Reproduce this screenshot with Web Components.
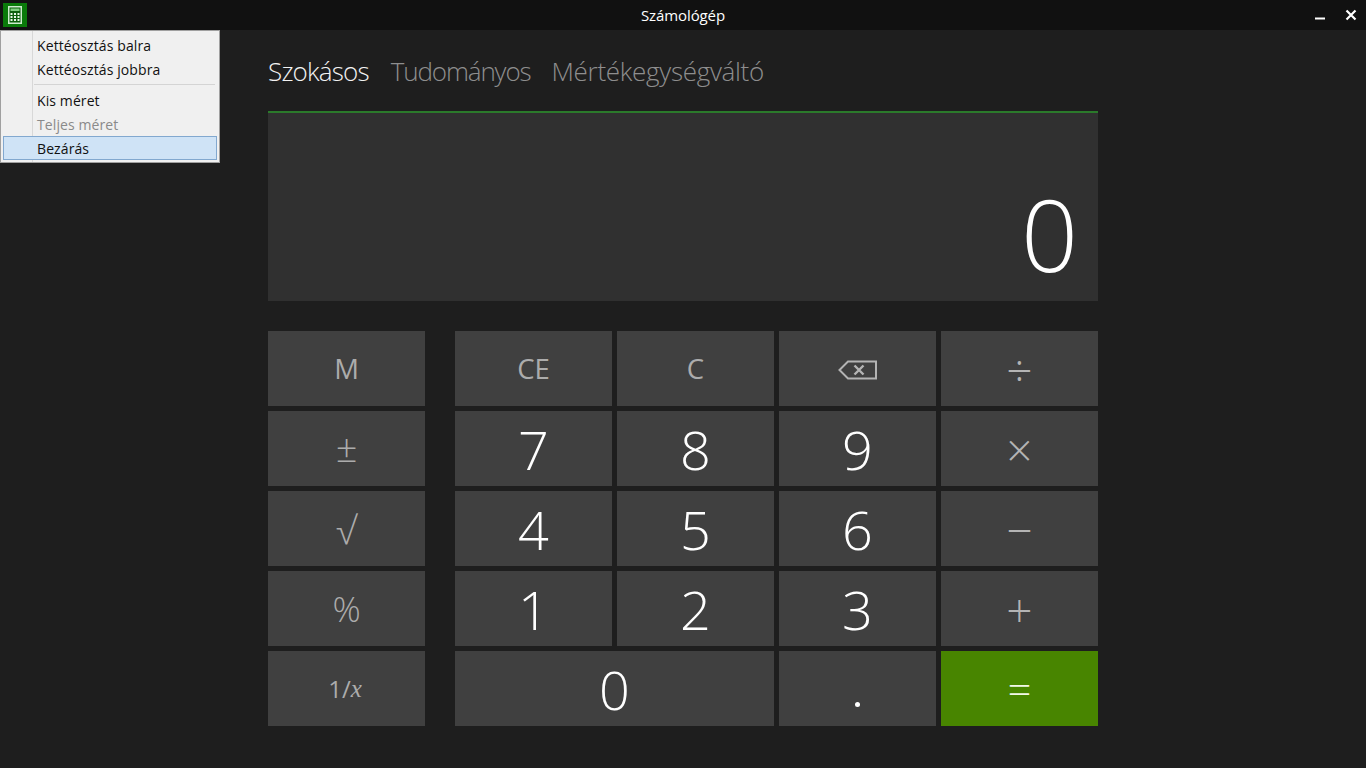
<!DOCTYPE html>
<html lang="hu">
<head>
<meta charset="utf-8">
<title>Számológép</title>
<style>
  html, body { margin: 0; height: 100%; background: #1e1e1e; overflow: hidden; }
  body { font-family: "Open Sans", "Liberation Sans", sans-serif; }
</style>
</head>
<body>
<calc-app></calc-app>

<script>
// Title bar with app icon, centered title and window buttons
class TitleBar extends HTMLElement {
  constructor() {
    super();
    this.attachShadow({ mode: "open" });
    this.shadowRoot.innerHTML = `
      <style>
        :host { display: flex; align-items: center; height: 30px; background: #111; color: #fff; box-sizing: border-box; }
        .side { flex: 1 1 200px; box-sizing: border-box; display: flex; align-items: center; }
        .right { justify-content: flex-end; gap: 20px; padding-right: 9px; }
        .title { font: 400 15px "Open Sans", sans-serif; letter-spacing: -0.1px; }
        svg { display: block; }
        .logo { margin-left: 3px; }
      </style>
      <div class="side">
        <svg class="logo" width="24" height="24" viewBox="0 0 24 24">
          <rect width="24" height="24" fill="#0a7a0a"/>
          <rect x="5.750" y="3.750" width="12.500" height="16.500" fill="#0b5f0b" stroke="#cdeccd" stroke-width="1.500"/>
          <rect x="7.500" y="5.500" width="9" height="2.500" fill="#7fcf7f"/>
          <path d="M7.500 10h2v2h-2zM11 10h2v2h-2zM14.500 10h2v2h-2zM7.500 13h2v2h-2zM11 13h2v2h-2zM14.500 13h2v2h-2zM7.500 16h2v2h-2zM11 16h2v2h-2zM14.500 16h2v2h-2z" fill="#e6f7e6"/>
        </svg>
      </div>
      <div class="title">Számológép</div>
      <div class="side right">
        <svg width="10" height="10" viewBox="0 0 10 10"><rect y="7.500" width="10" height="2" fill="#fff"/></svg>
        <svg width="12" height="12" viewBox="0 0 12 12"><path d="M1.500 1.500l9 9M10.500 1.500l-9 9" stroke="#fff" stroke-width="2.200" fill="none"/></svg>
      </div>
    `;
  }
}

// Classic system menu, lies over the window content
class SysMenu extends HTMLElement {
  constructor() {
    super();
    this.attachShadow({ mode: "open" });
    this.shadowRoot.innerHTML = `
      <style>
        :host {
          position: absolute; left: 0; top: 30px; width: 220px; height: 133px;
          box-sizing: border-box; padding: 3px 2px 2px;
          background: #f0f0f0; border: 1px solid #a0a0a0; color: #111;
          font: 400 14px "Open Sans", sans-serif; letter-spacing: 0.1px;
        }
        .gutter { position: absolute; left: 31px; top: 0; bottom: 0; width: 1px; background: #d8d8d8; }
        .item { position: relative; height: 24px; line-height: 23px; padding-left: 34px; box-sizing: border-box; }
        .off { color: #8a8a8a; }
        .sep { position: relative; height: 1px; margin: 2px 2px 4px 31px; background: #d4d4d4; }
        .on { background: #cfe3f6; border: 1px solid #82a8cf; padding-left: 33px; line-height: 23px; margin-top: -1px; }
      </style>
      <div class="gutter"></div>
      <div class="item">Kettéosztás balra</div>
      <div class="item">Kettéosztás jobbra</div>
      <div class="sep"></div>
      <div class="item">Kis méret</div>
      <div class="item off">Teljes méret</div>
      <div class="item on">Bezárás</div>
    `;
  }
}

class CalcTabs extends HTMLElement {
  constructor() {
    super();
    this.attachShadow({ mode: "open" });
    this.shadowRoot.innerHTML = `
      <style>
        :host { display: flex; gap: 21px; height: 81px; padding-top: 21px; box-sizing: border-box; font: 300 26px/40px "Open Sans", sans-serif; color: #8e8e8e; }
        .active { color: #f2f2f2; letter-spacing: -0.8px; }
        .sci { letter-spacing: -1.15px; margin-left: 1px; }
        .conv { letter-spacing: -0.3px; }
      </style>
      <span class="active">Szokásos</span>
      <span class="sci">Tudományos</span>
      <span class="conv">Mértékegységváltó</span>
    `;
  }
}

class CalcDisplay extends HTMLElement {
  constructor() {
    super();
    this.attachShadow({ mode: "open" });
    this.shadowRoot.innerHTML = `
      <style>
        :host {
          display: flex; justify-content: flex-end; align-items: flex-end;
          height: 190px; box-sizing: border-box; padding: 0 20px 0 0;
          background: #303030; border-top: 2px solid #2b7a2b; color: #fff;
          font: 300 100px/136px "Open Sans", sans-serif;
        }
      </style>
      <slot></slot>
    `;
  }
}

// One keypad button. kind: "op" grey label, "sym" big grey sign, "eq" green, default white digit
class CalcKey extends HTMLElement {
  constructor() {
    super();
    this.attachShadow({ mode: "open" });
    this.shadowRoot.innerHTML = `
      <style>
        :host {
          display: flex; align-items: center; justify-content: center;
          height: 75px; background: #404040; color: #fff;
          font: 300 54px/1 "Open Sans", sans-serif;
        }
        :host([kind="op"]) { color: #acacac; font-size: 27.500px; font-weight: 400; }
        :host([kind="sym"]) { color: #b4b4b4; font-size: 46px; font-weight: 300; }
        :host([kind="eq"]) { background: #488500; font-size: 42px; color: #f2f7e8; }
        :host([wide]) { grid-column: span 2; }
      </style>
      <slot></slot>
    `;
  }
}

class CalcKeypad extends HTMLElement {
  constructor() {
    super();
    this.attachShadow({ mode: "open" });
    this.shadowRoot.innerHTML = `
      <style>
        :host { display: grid; grid-template-columns: 157px 1fr; column-gap: 30px; margin-top: 30px; }
        .col { display: grid; gap: 5px; grid-auto-rows: 75px; }
        .pad { display: grid; gap: 5px; grid-template-columns: repeat(4, 1fr); grid-auto-rows: 75px; }
      </style>
      <div class="col"><slot name="mem"></slot></div>
      <div class="pad"><slot></slot></div>
    `;
  }
}

class CalcApp extends HTMLElement {
  constructor() {
    super();
    this.attachShadow({ mode: "open" });
    this.shadowRoot.innerHTML = `
      <style>
        :host { display: block; height: 768px; position: relative; background: #1e1e1e; }
        main { width: 830px; margin-left: 268px; }
        .x { font: italic 400 25px "Liberation Serif", serif; }
        .one { font-size: 24px; margin-left: -3px; }
        .pm { font-size: 38px; font-weight: 300; margin-top: -3px; }
        .root { font-size: 38px; font-weight: 300; }
        .pct { font-size: 35px; font-weight: 300; }
        .dot { display: block; width: 5px; height: 5px; border-radius: 50%; background: #fff; margin-top: 32px; }
        svg { display: block; margin-top: 2px; }
      </style>
      <title-bar></title-bar>
      <main>
        <calc-tabs></calc-tabs>
        <calc-display>0</calc-display>
        <calc-keypad>
          <calc-key slot="mem" kind="op">M</calc-key>
          <calc-key slot="mem" kind="op"><span class="pm">±</span></calc-key>
          <calc-key slot="mem" kind="op"><span class="root">√</span></calc-key>
          <calc-key slot="mem" kind="op"><span class="pct">%</span></calc-key>
          <calc-key slot="mem" kind="op"><span class="one">1/</span><span class="x">x</span></calc-key>

          <calc-key kind="op">CE</calc-key>
          <calc-key kind="op">C</calc-key>
          <calc-key kind="op">
            <svg width="40" height="22" viewBox="0 0 40 22" fill="none" stroke="#b4b4b4">
              <path d="M1.500 11L10 2.500h28v17H10z" stroke-width="2"/>
              <path d="M16.500 6.500l9 9M25.500 6.500l-9 9" stroke-width="2.400"/>
            </svg>
          </calc-key>
          <calc-key kind="sym">÷</calc-key>

          <calc-key>7</calc-key>
          <calc-key>8</calc-key>
          <calc-key>9</calc-key>
          <calc-key kind="sym">×</calc-key>

          <calc-key>4</calc-key>
          <calc-key>5</calc-key>
          <calc-key>6</calc-key>
          <calc-key kind="sym">−</calc-key>

          <calc-key>1</calc-key>
          <calc-key>2</calc-key>
          <calc-key>3</calc-key>
          <calc-key kind="sym">+</calc-key>

          <calc-key wide>0</calc-key>
          <calc-key><span class="dot"></span></calc-key>
          <calc-key kind="eq">=</calc-key>
        </calc-keypad>
      </main>
      <sys-menu></sys-menu>
    `;
  }
}

customElements.define("title-bar", TitleBar);
customElements.define("sys-menu", SysMenu);
customElements.define("calc-tabs", CalcTabs);
customElements.define("calc-display", CalcDisplay);
customElements.define("calc-key", CalcKey);
customElements.define("calc-keypad", CalcKeypad);
customElements.define("calc-app", CalcApp);
</script>
</body>
</html>
